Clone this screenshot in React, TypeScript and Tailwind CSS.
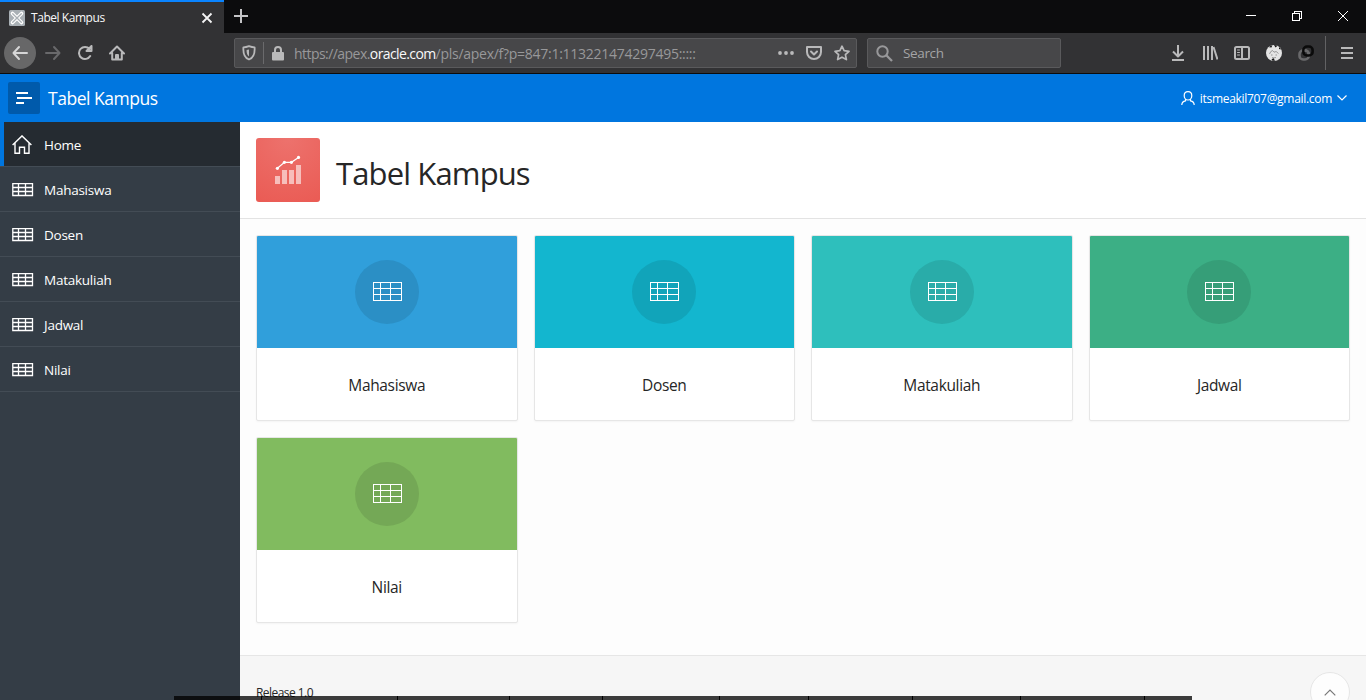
import React from "react";

type IconProps = { className?: string };

const NAV = ["Mahasiswa", "Dosen", "Matakuliah", "Jadwal", "Nilai"];

const CARDS = [
  { name: "Mahasiswa", bg: "bg-[#309fdb]", disc: "bg-[#2b8fc5]" },
  { name: "Dosen", bg: "bg-[#13b6cf]", disc: "bg-[#11a4ba]" },
  { name: "Matakuliah", bg: "bg-[#2ebfbc]", disc: "bg-[#29aca9]" },
  { name: "Jadwal", bg: "bg-[#3caf85]", disc: "bg-[#369e78]" },
  { name: "Nilai", bg: "bg-[#81bb5f]", disc: "bg-[#74a856]" },
];

const TASKS = [88, 136, 112, 93, 117, 89, 104, 108, 124, 47];

function NavTable() {
  return (
    <svg width="22" height="14" viewBox="0 0 22 14" className="mt-[2px] shrink-0" fill="none" stroke="#fff" strokeWidth="1.3">
      <path d="M.8 .7h19.700v11.800h-19.700zM.5 4.500h20M.5 8.500h20M6.500 .5v12M13.500 .5v12" />
    </svg>
  );
}

function CardTable() {
  return (
    <svg width="30" height="20" viewBox="0 0 30 20" shapeRendering="crispEdges" fill="none" stroke="#fff">
      <path d="M1.500 .5h28v18h-28zM1.500 6.500h28M1.500 12.500h28M8.500 .5v18M18.500 .5v18" />
    </svg>
  );
}

function Icon({ children, className = "", size = 16 }: IconProps & { children: React.ReactNode; size?: number }) {
  return (
    <svg width={size} height={size} viewBox="0 0 16 16" fill="none" stroke="currentColor" strokeWidth="2" strokeLinecap="round" strokeLinejoin="round" className={"shrink-0 " + className}>
      {children}
    </svg>
  );
}

function TabStrip() {
  return (
    <div className="flex h-[33px] bg-[#0c0c0d]">
      <div className="flex w-[224px] items-center border-t-2 border-[#0a84ff] bg-[#323234] pl-[9px] pr-[11px]">
        <svg width="16" height="16" viewBox="0 0 16 16" className="shrink-0">
          <rect width="16" height="16" rx="1.5" fill="#a9b0b5" />
          <path d="M3.500 3.500l9 9M12.500 3.500l-9 9" stroke="#fff" strokeWidth="3.600" strokeLinecap="round" />
          <path d="M3.700 3.700l8.600 8.600M12.300 3.700l-8.600 8.600" stroke="#a9b0b5" strokeWidth="1.300" strokeLinecap="round" />
        </svg>
        <span className="ml-[6px] grow text-[12px] tracking-[-0.45px] text-[#f9f9fa]">Tabel Kampus</span>
        <svg width="12" height="12" viewBox="0 0 12 12" stroke="#f4f4f5" strokeWidth="1.8" className="shrink-0">
          <path d="M1.500 1.500l9 9M10.500 1.500l-9 9" />
        </svg>
      </div>
      <svg width="14" height="14" viewBox="0 0 14 14" stroke="#c4c4c6" strokeWidth="2" className="ml-[10px] mt-[9px]">
        <path d="M7 0v14M0 7h14" />
      </svg>
      <div className="ml-auto flex pr-[18px] pt-[11px] text-white">
        <svg width="10" height="10" viewBox="0 0 10 10" stroke="currentColor" shapeRendering="crispEdges">
          <path d="M0 4.500h10" />
        </svg>
        <svg width="10" height="10" viewBox="0 0 10 10" stroke="currentColor" fill="none" shapeRendering="crispEdges" className="ml-[36px]">
          <path d="M.5 2.500h7v7h-7zM2.500 2.500v-2h7v7h-2" />
        </svg>
        <svg width="10" height="10" viewBox="0 0 10 10" stroke="currentColor" className="ml-[36px]">
          <path d="M0 0l10 10M10 0L0 10" />
        </svg>
      </div>
    </div>
  );
}

function Toolbar() {
  return (
    <div className="flex h-[41px] items-center border-b border-[#0c0c0d] bg-[#323234] text-[#b9b9ba]">
      <div className="ml-[4px] flex h-8 w-8 shrink-0 items-center justify-center rounded-full bg-[#676768] text-[#d6d6d7]">
        <Icon><path d="M15 8H2M7 2L1.500 8L7 14" /></Icon>
      </div>
      <Icon className="ml-[9px] text-[#69696b]"><path d="M1 8h13M9 2l5.500 6L9 14" /></Icon>
      <Icon className="ml-[16px]"><path d="M13.200 11A6 6 0 1 1 12.500 4M14.500 1v5h-5z" /></Icon>
      <Icon className="ml-[16px]"><path d="M1 8.500L8 1.500l7 7M3.200 8v6.500h9.600V8M7 14v-4h2v4" /></Icon>

      <div className="ml-[109px] flex h-[30px] w-[623px] shrink-0 items-center rounded-[2px] border border-[#5a5a5c] bg-[#474749]">
        <svg width="14" height="16" viewBox="0 0 14 16" fill="none" stroke="currentColor" strokeWidth="1.8" className="ml-[7px] shrink-0">
          <path d="M7 1.200C5 2 3 2.400 1.400 2.400C1 8.500 2.400 12.800 7 14.500C11.600 12.800 13 8.500 12.600 2.400C11 2.400 9 2 7 1.200z" strokeLinejoin="round" />
          <path d="M7 4.500v7C5 10 4.500 8 4.600 5z" fill="currentColor" stroke="none" />
        </svg>
        <div className="ml-[7px] h-[22px] w-px bg-[#6a6a6c]" />
        <svg width="12" height="15" viewBox="0 0 12 15" className="ml-[8px] shrink-0" fill="none" stroke="currentColor" strokeWidth="2">
          <path d="M3 7V4a3 3 0 0 1 6 0v3" />
          <rect y="6" width="12" height="8.500" rx="1" fill="currentColor" stroke="none" />
        </svg>
        <span className="ml-[10px] mt-px grow whitespace-nowrap text-[14px] tracking-[-0.27px] text-[#98989a]">
          <span className="tracking-[-0.55px]">https://apex.</span>
          <span className="tracking-[-0.6px] text-[#f9f9fa]">oracle.com</span>/pls/apex/f?p=847:1:113221474297495:::::
        </span>
        <svg width="16" height="4" viewBox="0 0 16 4" fill="currentColor" className="shrink-0">
          <circle cx="2" cy="2" r="1.900" /><circle cx="8" cy="2" r="1.900" /><circle cx="14" cy="2" r="1.900" />
        </svg>
        <Icon className="ml-[12px]"><path d="M1 2h14v5a7 7 0 0 1-14 0zM5 6.500l3 3l3-3" /></Icon>
        <Icon className="ml-[12px] mr-[6px]"><path strokeWidth="1.700" d="M8 1.200l2.100 4.500l4.900.6l-3.600 3.400l1 4.900L8 12.200l-4.400 2.400l1-4.900L1 6.300l4.900-.6z" /></Icon>
      </div>

      <div className="ml-[10px] flex h-[30px] w-[194px] shrink-0 items-center rounded-[2px] border border-[#5a5a5c] bg-[#474749]">
        <svg width="17" height="17" viewBox="0 0 17 17" fill="none" stroke="#98989a" strokeWidth="2" className="ml-[8px]">
          <circle cx="6.500" cy="6.500" r="5.200" /><path d="M10.300 10.300L16 16" strokeWidth="2.300" />
        </svg>
        <span className="ml-[10px] mt-px text-[13.5px] tracking-[-0.35px] text-[#a4a4a6]">Search</span>
      </div>

      <div className="ml-auto flex h-full items-center">
        <Icon className="mr-[16px]"><path strokeLinecap="butt" d="M8 0v11M3 6.500l5 5l5-5M2 15h12" /></Icon>
        <Icon className="mr-[16px]"><path strokeLinecap="butt" d="M2 1v14M6 1v14M10 1v14M11.500 2l4 12.500" /></Icon>
        <Icon className="mr-[16px]"><path d="M2.500 2h11q1.500 0 1.500 1.500v9q0 1.500-1.500 1.500h-11q-1.500 0-1.500-1.500v-9q0-1.500 1.500-1.500zM8 2v12" /><path strokeWidth="1" d="M3.500 5h2M3.500 7.500h2M3.500 10h2" /></Icon>
        <svg width="16" height="16" viewBox="0 0 16 16" className="mr-[16px]">
          <circle cx="8" cy="8" r="8" fill="#e4e4e4" />
          <path d="M3 2.300Q4.500 .6 6.300 .2L5.500 2.500zM8 0q2 0 3.500 .8L9.500 2.500zM13 2q1.500 1 2 2.500L13 4zM5.500 14.500L7.500 13l1.500 2.800L6.500 15.800z" fill="#161616" />
          <path d="M3.500 9q1-3 3-3.500l1.500 1.700q2-2 4.500 1.300" fill="none" stroke="#8d8d8d" strokeWidth=".9" />
          <path d="M5 10h1.500M9.500 10H11M6 12.500q2 .8 4 0" stroke="#8d8d8d" strokeWidth=".9" fill="none" />
        </svg>
        <svg width="16" height="16" viewBox="0 0 16 16" fill="none" strokeWidth="2.600" className="mr-[11px]">
          <rect x="1.500" y="5.500" width="9.200" height="9" rx="3.600" stroke="#69696b" />
          <rect x="5.400" y="1.500" width="9.200" height="9" rx="3.600" stroke="#0a0a0a" />
          <path d="M6.700 5.500h.4a3.600 3.600 0 0 1 3.600 3.400" stroke="#69696b" />
        </svg>
        <div className="h-[34px] w-px bg-[#626264]" />
        <svg width="12" height="12" viewBox="0 0 12 12" fill="none" stroke="currentColor" strokeWidth="2" className="ml-[15px] mr-[13px]">
          <path d="M0 1h12M0 6h12M0 11h12" />
        </svg>
      </div>
    </div>
  );
}

function AppHeader() {
  return (
    <header className="flex h-12 items-center bg-[#0076df] text-white">
      <div className="ml-2 flex h-8 w-8 items-center justify-center rounded-[2px] bg-[#005aab]">
        <svg width="16" height="12" viewBox="0 0 16 12" fill="none" stroke="#fff" strokeWidth="2">
          <path d="M0 1h12M1 6h15M0 11h8" />
        </svg>
      </div>
      <span className="ml-2 mt-px text-[17.5px] tracking-[-0.48px]">Tabel Kampus</span>
      <div className="ml-auto flex items-center pr-[19px]">
        <svg width="14" height="15" viewBox="0 0 14 15" fill="none" stroke="#fff" strokeWidth="1.200">
          <path d="M7 .7c2.300 0 3.800 1.700 3.800 4S9.300 9 7 9S3.200 7 3.200 4.700S4.700.7 7 .7zM4.500 8.500v1.300C2 10.300.8 11.500.8 14M9.500 8.500v1.300c2.500.5 3.700 1.700 3.700 4.200" />
        </svg>
        <span className="ml-[5px] mt-[2px] text-[12px] tracking-[-0.3px]">itsmeakil707@gmail.com</span>
        <svg width="10" height="6" viewBox="0 0 10 6" fill="none" stroke="#fff" strokeWidth="1.200" className="ml-[5px]">
          <path d="M.5 .5L5 5L9.500 .5" />
        </svg>
      </div>
    </header>
  );
}

function Sidebar() {
  return (
    <nav className="w-[240px] shrink-0 bg-[#343d46] text-[13.5px] tracking-[-0.25px] text-white">
      <div className="flex h-[45px] items-center border-b border-[#434c55] bg-[linear-gradient(to_right,#0076df_4px,#252b31_4px)] pl-3">
        <svg width="20" height="19" viewBox="0 0 20 19" fill="none" stroke="#fff" strokeWidth="1.400">
          <path d="M.6 10L10 .9L19.400 10M3 8v10.200h4.500v-6h5v6H17V8" />
        </svg>
        <span className="ml-3 mt-[2px]">Home</span>
      </div>
      {NAV.map((n) => (
        <div key={n} className="flex h-[45px] items-center border-b border-[#434c55] pl-3">
          <NavTable />
          <span className="ml-[10px] mt-[2px]">{n}</span>
        </div>
      ))}
    </nav>
  );
}

function Main() {
  return (
    <main className="flex grow flex-col bg-[#fdfdfd] text-[#262626]">
      <div className="flex h-[97px] shrink-0 items-center border-b border-[#e3e3e3] bg-white pl-4">
        <div className="flex h-16 w-16 items-center justify-center rounded-[3px] bg-[radial-gradient(circle_at_top,#ed726d,#ea5b54)]">
          <svg width="28" height="30" viewBox="0 0 28 30" fill="none">
            <path d="M1 21h5v8H1zM8 15h5v14H8zM15 15h5v14h-5zM22 10h5v19h-5z" fill="#f7bebb" />
            <path d="M3.400 13.300L10.400 7.300h7L24.500 2.400" stroke="#fff" strokeWidth="1.200" />
            <g fill="#fff"><circle cx="3.400" cy="13.300" r="1.600" /><circle cx="10.400" cy="7.300" r="1.600" /><circle cx="17.400" cy="7.300" r="1.600" /><circle cx="24.500" cy="2.400" r="1.600" /></g>
          </svg>
        </div>
        <h1 className="ml-4 mt-[5px] text-[31px] leading-[44px] tracking-[-0.87px]">Tabel Kampus</h1>
      </div>
      <div className="grid grid-cols-4 gap-4 p-4 pb-8">
        {CARDS.map((c) => (
          <div key={c.name} className="h-[186px] overflow-hidden rounded-[2px] border border-[#e6e6e6] bg-white shadow-[0_1px_2px_rgba(0,0,0,0.04)]">
            <div className={"flex h-[112px] items-center justify-center " + c.bg}>
              <div className={"flex h-16 w-16 items-center justify-center rounded-full " + c.disc}>
                <CardTable />
              </div>
            </div>
            <div className="flex h-[72px] items-center justify-center pt-[3px] text-[15.5px] tracking-[-0.35px]">{c.name}</div>
          </div>
        ))}
      </div>
      <footer className="flex grow justify-between border-t border-[#e6e6e6] bg-[#f6f6f6] pl-4 pr-4">
        <span className="mt-[29px] text-[12px] leading-4 tracking-[-0.55px]">Release 1.0</span>
        <div className="mt-4 flex h-10 w-10 shrink-0 items-center justify-center rounded-full border border-[#e6e6e6] bg-[#fdfdfd]">
          <svg width="12" height="7" viewBox="0 0 12 7" fill="none" stroke="#777" strokeWidth="1.200">
            <path d="M.7 6.300L6 1L11.300 6.300" />
          </svg>
        </div>
      </footer>
    </main>
  );
}

export default function App() {
  return (
    <div className="relative flex h-[700px] w-[1366px] flex-col overflow-hidden font-['Open_Sans','Noto_Sans',sans-serif]">
      <TabStrip />
      <Toolbar />
      <AppHeader />
      <div className="flex h-[578px] shrink-0">
        <Sidebar />
        <Main />
      </div>
      <div className="absolute bottom-0 left-[174px] flex h-1 w-[1018px] bg-black/76">
        {TASKS.map((w, i) => (
          <div key={i} className="shrink-0 border-r border-black last:border-r-0" style={{ width: w }} />
        ))}
      </div>
    </div>
  );
}
